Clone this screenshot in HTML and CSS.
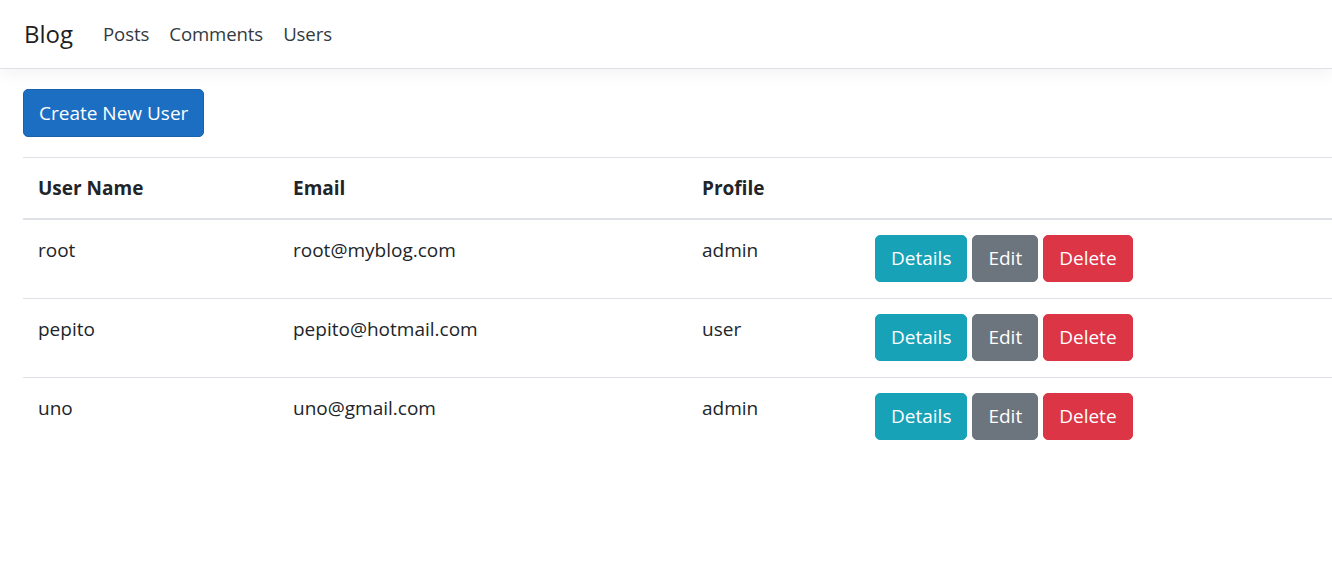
FILE: index.html
```html
<!DOCTYPE html>
<html lang="en">
<head>
<meta charset="utf-8">
<title>Users - Blog</title>
<link rel="stylesheet" href="styles.css">
</head>
<body>
<header class="navbar">
  <a class="brand" href="#">Blog</a>
  <nav class="nav">
    <a class="nav-link" href="#">Posts</a>
    <a class="nav-link" href="#">Comments</a>
    <a class="nav-link" href="#">Users</a>
  </nav>
</header>
<main class="main">
  <p class="actions"><a class="btn btn-primary" href="#">Create New User</a></p>
  <table class="table">
    <thead>
      <tr>
        <th class="c1">User Name</th>
        <th class="c2">Email</th>
        <th class="c3">Profile</th>
        <th class="c4"></th>
      </tr>
    </thead>
    <tbody>
      <tr>
        <td>root</td>
        <td>root@myblog.com</td>
        <td>admin</td>
        <td><div class="ops"><a class="btn btn-sm btn-info" href="#">Details</a><a class="btn btn-sm btn-secondary" href="#">Edit</a><a class="btn btn-sm btn-danger" href="#">Delete</a></div></td>
      </tr>
      <tr>
        <td>pepito</td>
        <td>pepito@hotmail.com</td>
        <td>user</td>
        <td><div class="ops"><a class="btn btn-sm btn-info" href="#">Details</a><a class="btn btn-sm btn-secondary" href="#">Edit</a><a class="btn btn-sm btn-danger" href="#">Delete</a></div></td>
      </tr>
      <tr>
        <td>uno</td>
        <td>uno@gmail.com</td>
        <td>admin</td>
        <td><div class="ops"><a class="btn btn-sm btn-info" href="#">Details</a><a class="btn btn-sm btn-secondary" href="#">Edit</a><a class="btn btn-sm btn-danger" href="#">Delete</a></div></td>
      </tr>
    </tbody>
  </table>
</main>
</body>
</html>
```

FILE: styles.css
```css
* { box-sizing: border-box; }
html, body { margin: 0; padding: 0; }
body {
  font-family: "Open Sans", "Noto Sans", "Liberation Sans", sans-serif;
  font-size: 19px;
  line-height: 30px;
  color: #212529;
  background: #fff;
  overflow: hidden;
}
a { text-decoration: none; }

.navbar {
  display: flex;
  align-items: center;
  height: 69px;
  padding: 0 0 0 24px;
  border-bottom: 1px solid #dee2e6;
  box-shadow: 0 5px 15px rgba(0,0,0,.05);
  background: #fff;
}
.brand {
  font-size: 24px;
  color: rgba(0,0,0,.9);
  margin-right: 20px;
  line-height: 36px;
}
.nav { display: flex; }
.nav-link {
  color: #343a40;
  padding: 0 10px;
  font-size: 18.6px;
  letter-spacing: -0.1px;
}

.main { padding: 20px 0 0 23px; }
.actions { margin: 0 0 20px; }
.btn {
  display: inline-block;
  color: #fff;
  padding: 8px 15px;
  border: 1px solid transparent;
  border-radius: 5px;
  line-height: 30px;
  font-size: 19px;
  vertical-align: top;
}
.btn-sm { padding: 7px 15px 8px; }
.btn-primary { background: #1b6ec2; border-color: #1861ac; }
.btn-info { background: #17a2b8; border-color: #17a2b8; }
.btn-secondary { background: #6c757d; border-color: #6c757d; }
.btn-danger { background: #dc3545; border-color: #dc3545; }

.table {
  width: 100%;
  border-collapse: collapse;
  table-layout: fixed;
}
.table th, .table td {
  text-align: left;
  vertical-align: top;
  padding: 15px;
  border-top: 1px solid #dee2e6;
}
.table td { padding-bottom: 16px; }
.table th { font-weight: 700; border-bottom: 2px solid #dee2e6; }
.c1 { width: 255px; }
.c2 { width: 409px; }
.c3 { width: 173px; }
.ops { display: flex; gap: 5px; }
```
